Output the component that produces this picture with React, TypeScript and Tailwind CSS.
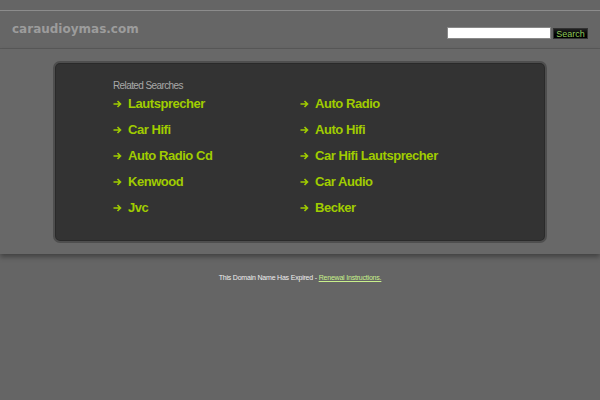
const left = ["Lautsprecher", "Car Hifi", "Auto Radio Cd", "Kenwood", "Jvc"];
const right = ["Auto Radio", "Auto Hifi", "Car Hifi Lautsprecher", "Car Audio", "Becker"];

function Arrow() {
  return (
    <svg width="9" height="8" viewBox="0 0 9 8" className="shrink-0">
      <path d="M0.5 4H7.5M4.5 1L7.5 4L4.5 7" fill="none" stroke="#a0cc00" strokeWidth="1.6" />
    </svg>
  );
}

function SearchLink({ label }: { label: string }) {
  return (
    <a className="flex items-center gap-[6px] text-[#a0cc00] text-[13px] font-bold tracking-[-0.45px] leading-[26px] h-[26px]">
      <Arrow />
      <span>{label}</span>
    </a>
  );
}

export default function App() {
  return (
    <div className="w-[600px] h-[400px] bg-[#656565] font-['Liberation_Sans',Arial,sans-serif] overflow-hidden">
      {/* Header */}
      <div className="h-[10px]" />
      <div className="h-[39px] bg-[#666] border-t border-[#8c8c8c] border-b border-b-[#595959] flex items-center justify-between pl-[12px] pr-[12px]">
        <span className="font-['DejaVu_Sans',Verdana,sans-serif] font-bold text-[12px] text-[#9c9c9c] -mt-[1px]">
          caraudioymas.com
        </span>
        <div className="flex items-center gap-[2px] mt-[7px]">
          <input className="w-[104px] h-[12px] bg-white border border-[#888] outline-none" />
          <button className="w-[35px] h-[11px] bg-gradient-to-b from-[#222] to-[#000] text-[#8fc85a] text-[9px] leading-[11px] border border-[#333]">
            Search
          </button>
        </div>
      </div>

      {/* Content band */}
      <div className="bg-[#686868] pt-[12px] pb-[11px] shadow-[0_3px_5px_rgba(0,0,0,0.35)] relative">
        <div className="mx-[53px] h-[182px] rounded-[7px] bg-[#333] border-2 border-[#4e4e4e] shadow-[inset_0_0_0_1px_#2a2a2a] pl-[58px] pt-[16px]">
          <div className="text-[10px] tracking-[-0.6px] leading-[14px] text-[#a8a8a8]">Related Searches</div>
          <div className="grid grid-cols-[187px_1fr] -mt-[2px]">
            <div className="flex flex-col">
              {left.map((l) => (
                <SearchLink key={l} label={l} />
              ))}
            </div>
            <div className="flex flex-col">
              {right.map((r) => (
                <SearchLink key={r} label={r} />
              ))}
            </div>
          </div>
        </div>
      </div>

      {/* Footer */}
      <div className="mt-[19px] text-center text-[7px] tracking-[-0.2px] leading-[9px] text-[#eee]">
        This Domain Name Has Expired -{" "}
        <a className="text-[#c8f08c] underline">Renewal Instructions.</a>
      </div>
    </div>
  );
}
